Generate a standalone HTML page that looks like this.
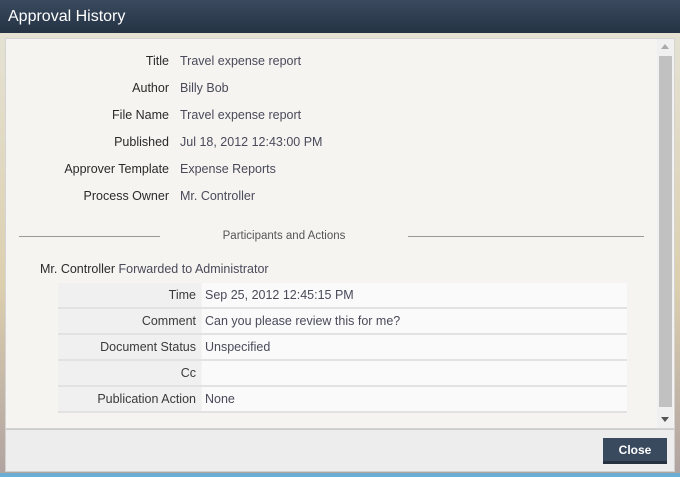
<!DOCTYPE html>
<html><head><style>
*{margin:0;padding:0;box-sizing:border-box}
body{width:680px;height:477px;overflow:hidden;position:relative;font-family:"Liberation Sans",sans-serif;font-size:12.5px;background:linear-gradient(#e6e4d8,#dccfae 60%,#b0a2a0)}
.title{position:absolute;left:0;top:0;width:680px;height:33px;background:linear-gradient(#3a4a5e,#243244);color:#fff;font-size:16px;padding:8px 0 0 8px}
.panel{position:absolute;left:5px;top:38px;width:670px;height:391px;background:#f5f4f1;border:1px solid #d4d4d4}
.foot{position:absolute;left:5px;top:429px;width:670px;height:43px;background:#ededed;border:1px solid #d0d0d0;border-top:1px solid #ccc}
.bot{position:absolute;left:0;top:473px;width:680px;height:4px;background:#6aaed4}
.btn{position:absolute;left:603px;top:438px;width:64px;height:26px;background:#394a5e;border-bottom:3px solid #26323f;color:#fff;font-weight:bold;text-align:center;line-height:24px;font-size:12px}
.sb{position:absolute;left:657px;top:39px;width:16px;height:389px;background:#f0f0f0}
.thumb{position:absolute;left:659px;top:56px;width:13px;height:351px;background:#c1c1c1}
.lab{position:absolute;right:511px;color:#2a2a2a;text-align:right}
.val{position:absolute;left:180px;color:#4a4a5a}
.row{position:absolute;left:58px;width:569px;height:26px;border-bottom:2px solid #e2e2e2}
.row .l{position:absolute;left:0;top:0;width:143px;height:24px;background:#f0f0f0;text-align:right;padding:5px 5px 0 0;color:#3a3a3a}
.row .v{position:absolute;left:144px;top:0;width:425px;height:24px;background:#fafafa;padding:5px 0 0 3px;color:#4a4a5a}
</style></head><body>
<div class="title">Approval History</div>
<div class="panel"></div>
<div class="sb"></div><div class="thumb"></div>
<div style="position:absolute;left:661px;top:44px;width:0;height:0;border-left:4px solid transparent;border-right:4px solid transparent;border-bottom:5px solid #aaa"></div>
<div style="position:absolute;left:661px;top:417px;width:0;height:0;border-left:4px solid transparent;border-right:4px solid transparent;border-top:5px solid #555"></div>
<div class="lab" style="top:54px">Title</div><div class="val" style="top:54px">Travel expense report</div>
<div class="lab" style="top:81px">Author</div><div class="val" style="top:81px">Billy Bob</div>
<div class="lab" style="top:108px">File Name</div><div class="val" style="top:108px">Travel expense report</div>
<div class="lab" style="top:135px">Published</div><div class="val" style="top:135px">Jul 18, 2012 12:43:00 PM</div>
<div class="lab" style="top:162px">Approver Template</div><div class="val" style="top:162px">Expense Reports</div>
<div class="lab" style="top:189px">Process Owner</div><div class="val" style="top:189px">Mr. Controller</div>
<div style="position:absolute;left:19px;top:236px;width:141px;height:1px;background:#999"></div>
<div style="position:absolute;left:408px;top:236px;width:236px;height:1px;background:#999"></div>
<div style="position:absolute;left:160px;width:248px;top:230px;text-align:center;color:#555;font-size:11.5px">Participants and Actions</div>
<div style="position:absolute;left:40px;top:262px;color:#2a2a2a"><span>Mr. Controller</span> <span style="color:#4a4a5a">Forwarded to Administrator</span></div>
<div class="row" style="top:283px"><div class="l">Time</div><div class="v">Sep 25, 2012 12:45:15 PM</div></div>
<div class="row" style="top:309px"><div class="l">Comment</div><div class="v">Can you please review this for me?</div></div>
<div class="row" style="top:335px"><div class="l">Document Status</div><div class="v">Unspecified</div></div>
<div class="row" style="top:361px"><div class="l">Cc</div><div class="v"></div></div>
<div class="row" style="top:387px"><div class="l">Publication Action</div><div class="v">None</div></div>
<div class="foot"></div>
<div class="btn">Close</div>
<div class="bot"></div>
</body></html>
